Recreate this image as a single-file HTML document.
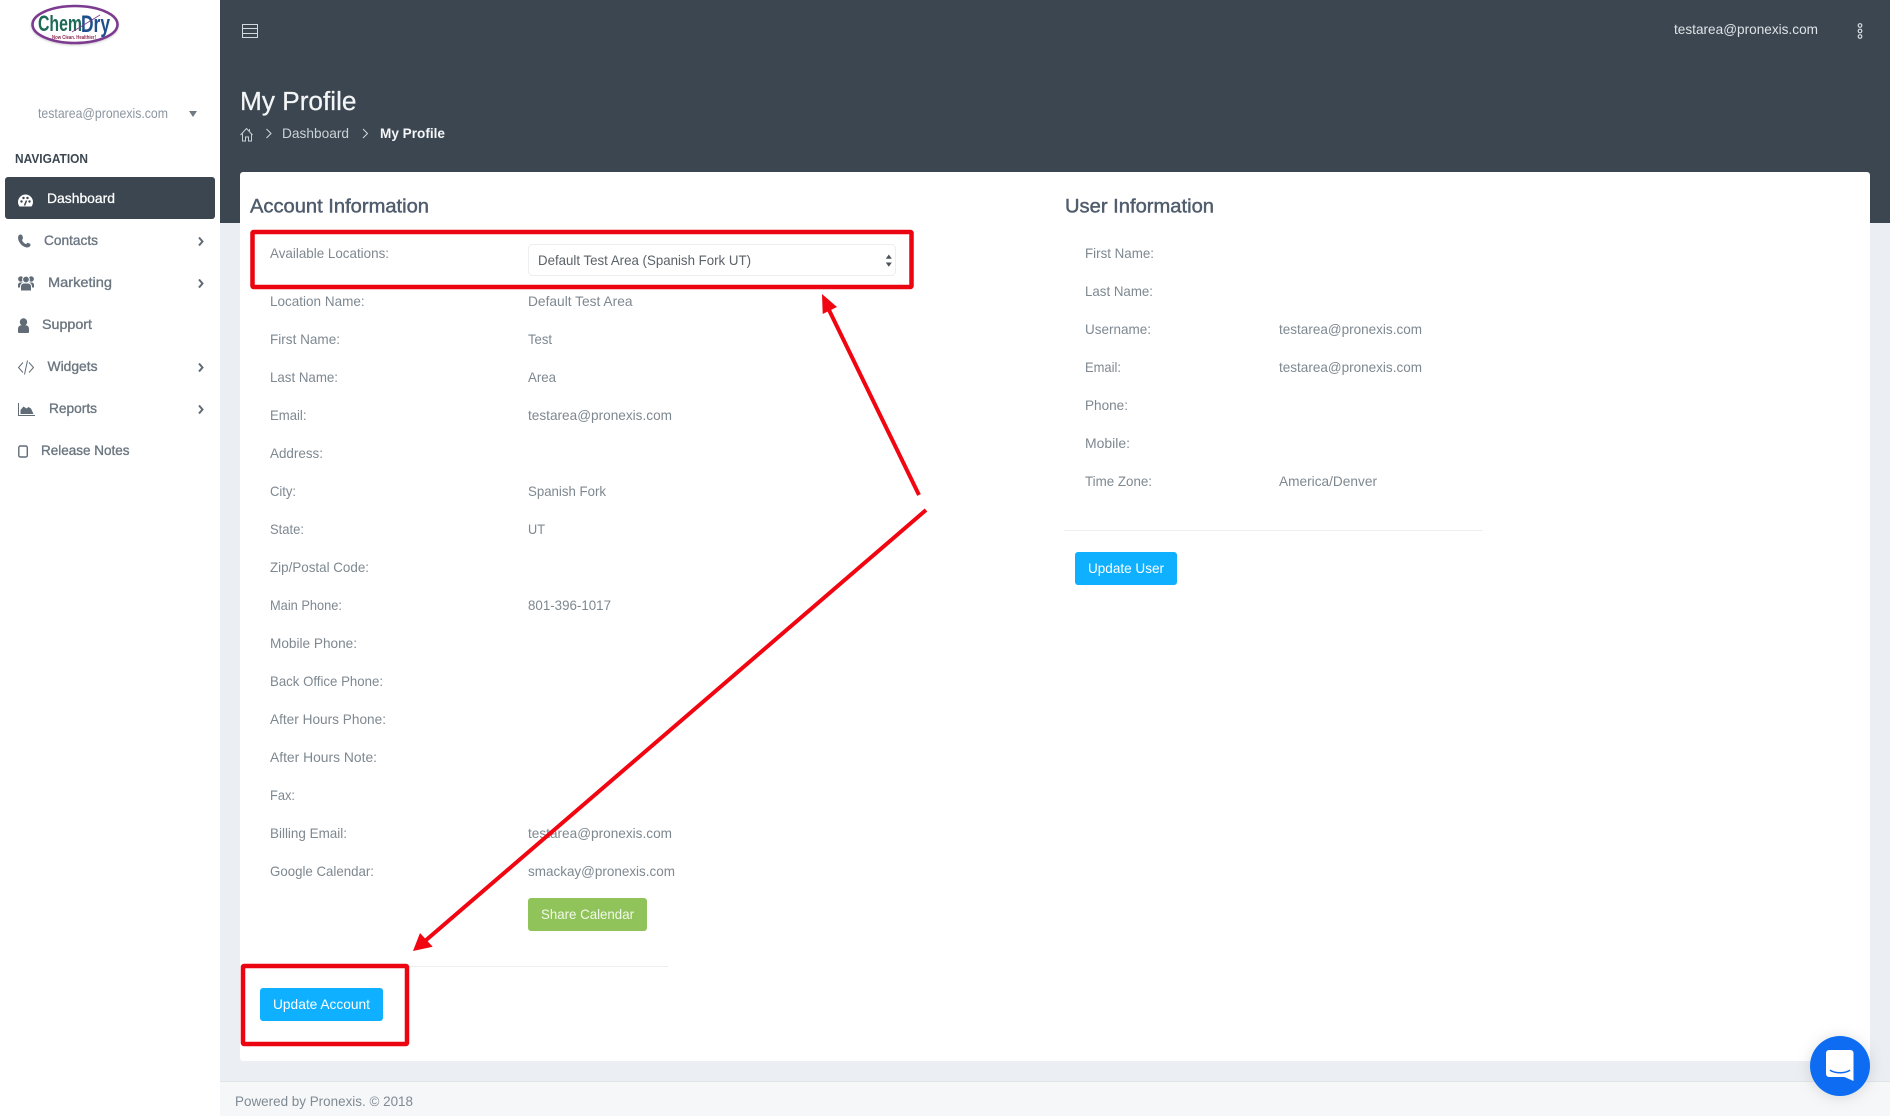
<!DOCTYPE html>
<html lang="en"><head><meta charset="utf-8"><title>My Profile</title>
<style>
html,body{margin:0;padding:0;width:1890px;height:1116px;overflow:hidden;background:#ebeef2}
svg{display:block}
text{font-family:"Liberation Sans",Arial,sans-serif;font-size:14px;fill:#7e8890}
.l{font-size:14px;fill:#7f8890}
.n{font-size:14px;fill:#6b7680;stroke:#6b7680;stroke-width:.35px}
.h{font-size:19.5px;fill:#4f5c6c;stroke:#4f5c6c;stroke-width:.45px}
.b{font-size:14px;fill:#fff}
</style></head><body>
<svg width="1890" height="1116" viewBox="0 0 1890 1116" xmlns="http://www.w3.org/2000/svg">
<defs>
<filter id="s" x="-50%" y="-50%" width="200%" height="200%"><feDropShadow dx="0" dy="1" stdDeviation="7" flood-color="#000" flood-opacity=".13"/></filter>
<filter id="ls" x="-10%" y="-20%" width="120%" height="140%"><feDropShadow dx="0" dy="1" stdDeviation="1" flood-color="#000" flood-opacity=".2"/></filter>
</defs>
<rect width="1890" height="1116" fill="#ebeef2"/>
<rect x="220" width="1670" height="223" fill="#3b4650"/>
<rect x="220" y="1081" width="1670" height="35" fill="#f5f7f9"/>
<rect x="220" y="1081" width="1670" height="1" fill="#e1e4e8"/>
<text x="235" y="1106" textLength="178" lengthAdjust="spacingAndGlyphs" style="fill:#808a93">Powered by Pronexis. © 2018</text>

<!-- sidebar -->
<rect width="220" height="1116" fill="#fff"/>
<g>
<ellipse cx="75" cy="24.5" rx="42.5" ry="18.5" fill="#fff" stroke="#7c3a8f" stroke-width="2.6" filter="url(#ls)"/>
<text x="38" y="31" textLength="44" lengthAdjust="spacingAndGlyphs" style="font-size:22px;font-weight:bold;fill:#1d6a58">Chem</text>
<text x="81" y="32" textLength="29" lengthAdjust="spacingAndGlyphs" style="font-size:24px;font-weight:bold;fill:#1d4f8a">Dry</text>
<path d="M72 32L100 15" stroke="#7c3a8f" stroke-width=".8" fill="none"/>
<text x="52" y="39" textLength="44" lengthAdjust="spacingAndGlyphs" style="font-size:5px;font-weight:bold;fill:#8d2a50">Now Clean. Healthier!</text>
</g>
<text x="38" y="118" textLength="130" lengthAdjust="spacingAndGlyphs" style="fill:#8c969f">testarea@pronexis.com</text>
<path d="M189 111h8l-4 6z" fill="#6f7a84"/>
<text x="15" y="163" textLength="73" lengthAdjust="spacingAndGlyphs" style="font-size:12.5px;font-weight:bold;fill:#3b4650">NAVIGATION</text>
<rect x="5" y="177" width="210" height="42" rx="3" fill="#3b4650"/>
<path d="M19.5 206.500a7.500 7.500 0 1 1 12 0z" fill="#fff"/>
<circle cx="21.500" cy="201.500" r="1.200" fill="#3b4650"/><circle cx="23.500" cy="198" r="1.200" fill="#3b4650"/><circle cx="27.500" cy="198" r="1.200" fill="#3b4650"/><circle cx="29.500" cy="201.500" r="1.200" fill="#3b4650"/><path d="M24.500 205.500l2-5" stroke="#3b4650" stroke-width="1.500"/>
<text x="47" y="203" textLength="68" lengthAdjust="spacingAndGlyphs" class="n" style="fill:#fff;stroke:#fff;stroke-width:.25px">Dashboard</text>

<path d="M19 235c1.500-1 3-.5 3.500 1l.5 2c0 1-1 1.500-1 2 .5 1.500 2 3.500 4 4 .7 0 1-1.200 2-1.200l2 1c1 .8 .5 2.200-.5 3-3 2-7-.5-9-3-2-2.500-3.500-6.500-1.500-8.800z" fill="#616c77"/>
<text x="44" y="245" textLength="54" lengthAdjust="spacingAndGlyphs" class="n">Contacts</text>
<path d="M199 237.500l3.500 4-3.500 4" fill="none" stroke="#5f6a75" stroke-width="2"/>

<circle cx="20.800" cy="279" r="2.700" fill="#616c77"/><circle cx="31.200" cy="279" r="2.700" fill="#616c77"/>
<path d="M18 287.500v-2.500c0-1.500 1-2.500 2.500-2.500h11c1.500 0 2.500 1 2.500 2.500v2.500z" fill="#616c77"/>
<circle cx="26" cy="279.500" r="3.400" fill="#616c77" stroke="#fff" stroke-width="1"/>
<path d="M20.500 291v-4.500c0-2 1.500-3.500 3.500-3.500h4c2 0 3.500 1.500 3.500 3.500v4.500z" fill="#616c77" stroke="#fff" stroke-width="1"/>
<text x="48" y="287" textLength="64" lengthAdjust="spacingAndGlyphs" class="n">Marketing</text>
<path d="M199 279.500l3.500 4-3.500 4" fill="none" stroke="#5f6a75" stroke-width="2"/>

<circle cx="23.500" cy="322" r="3.700" fill="#616c77"/><path d="M18 332v-3c0-3 2-4 5.500-4s5.500 1 5.500 4v3c0 .5-.5 1-1 1h-9c-.5 0-1-.5-1-1z" fill="#616c77"/>
<text x="42" y="329" textLength="50" lengthAdjust="spacingAndGlyphs" class="n">Support</text>

<path d="M23 362.500l-4.500 5 4.500 5M29 362.500l4.500 5-4.500 5M27.500 360.500l-3 14" fill="none" stroke="#616c77" stroke-width="1"/>
<text x="47.500" y="371" textLength="50" lengthAdjust="spacingAndGlyphs" class="n">Widgets</text>
<path d="M199 363.500l3.500 4-3.500 4" fill="none" stroke="#5f6a75" stroke-width="2"/>

<path d="M18.500 403v12.500H35" fill="none" stroke="#616c77" stroke-width="1"/>
<path d="M20.500 414v-4l3-3.500 3 2 2-1.500 2.500 1.500 2.500 5.500z" fill="#616c77"/>
<text x="49" y="413" textLength="48" lengthAdjust="spacingAndGlyphs" class="n">Reports</text>
<path d="M199 405.500l3.500 4-3.500 4" fill="none" stroke="#5f6a75" stroke-width="2"/>

<rect x="18.800" y="446" width="8.500" height="11" rx="1.500" fill="none" stroke="#616c77" stroke-width="1.400"/>
<text x="41" y="455" textLength="88.500" lengthAdjust="spacingAndGlyphs" class="n">Release Notes</text>

<!-- header -->
<g fill="none" stroke="#d4d9de" stroke-width="1">
<rect x="242.500" y="24.500" width="15" height="4"/><rect x="242.500" y="28.500" width="15" height="5"/><rect x="242.500" y="33.500" width="15" height="4"/>
</g>
<text x="1674" y="34" textLength="144" lengthAdjust="spacingAndGlyphs" style="fill:#dfe3e7">testarea@pronexis.com</text>
<g fill="none" stroke="#d4d9de" stroke-width="1.200"><circle cx="1860" cy="25.500" r="1.800"/><circle cx="1860" cy="31" r="1.800"/><circle cx="1860" cy="36.500" r="1.800"/></g>
<text x="240" y="110" textLength="116.500" lengthAdjust="spacingAndGlyphs" style="font-size:25.500px;fill:#f3f5f6;stroke:#f3f5f6;stroke-width:.25px">My Profile</text>
<path d="M240.500 135l6-6.500 6 6.500M242.500 133.500v7.500h3v-4h3v4h3v-7.500M249.500 129v2" fill="none" stroke="#c9ced3" stroke-width="1"/>
<path d="M266.500 129l4.500 4.500-4.500 4.500M363 129l4.500 4.500-4.500 4.500" fill="none" stroke="#d4d9de" stroke-width="1"/>
<text x="282" y="138" textLength="67" lengthAdjust="spacingAndGlyphs" style="fill:#ccd1d6">Dashboard</text>
<text x="380" y="138" textLength="65" lengthAdjust="spacingAndGlyphs" style="font-weight:bold;fill:#f5f6f7">My Profile</text>

<!-- card -->
<rect x="240" y="172" width="1630" height="889" rx="3" fill="#fff"/>
<text x="250" y="212.500" textLength="179" lengthAdjust="spacingAndGlyphs" class="h">Account Information</text>
<text x="1065" y="212.500" textLength="149" lengthAdjust="spacingAndGlyphs" class="h">User Information</text>

<text class="l" x="270" y="258" textLength="119" lengthAdjust="spacingAndGlyphs">Available Locations:</text>
<rect x="528.500" y="244.500" width="367" height="31" rx="4" fill="#fff" stroke="#eceef0"/>
<text x="538" y="265" textLength="213" lengthAdjust="spacingAndGlyphs" style="fill:#5b6268">Default Test Area (Spanish Fork UT)</text>
<path d="M885.800 258.800h6l-3-4.300zM885.800 262.500h6l-3 4.300z" fill="#4b535a"/>

<g class="l">
<text x="270" y="306" textLength="94.600" lengthAdjust="spacingAndGlyphs">Location Name:</text>
<text x="270" y="344" textLength="70" lengthAdjust="spacingAndGlyphs">First Name:</text>
<text x="270" y="382" textLength="68" lengthAdjust="spacingAndGlyphs">Last Name:</text>
<text x="270" y="420" textLength="36.500" lengthAdjust="spacingAndGlyphs">Email:</text>
<text x="270" y="458" textLength="53" lengthAdjust="spacingAndGlyphs">Address:</text>
<text x="270" y="496" textLength="26" lengthAdjust="spacingAndGlyphs">City:</text>
<text x="270" y="534" textLength="34" lengthAdjust="spacingAndGlyphs">State:</text>
<text x="270" y="572" textLength="99" lengthAdjust="spacingAndGlyphs">Zip/Postal Code:</text>
<text x="270" y="610" textLength="72" lengthAdjust="spacingAndGlyphs">Main Phone:</text>
<text x="270" y="648" textLength="87" lengthAdjust="spacingAndGlyphs">Mobile Phone:</text>
<text x="270" y="686" textLength="113" lengthAdjust="spacingAndGlyphs">Back Office Phone:</text>
<text x="270" y="724" textLength="116" lengthAdjust="spacingAndGlyphs">After Hours Phone:</text>
<text x="270" y="762" textLength="107" lengthAdjust="spacingAndGlyphs">After Hours Note:</text>
<text x="270" y="800" textLength="25" lengthAdjust="spacingAndGlyphs">Fax:</text>
<text x="270" y="838" textLength="77" lengthAdjust="spacingAndGlyphs">Billing Email:</text>
<text x="270" y="876" textLength="104" lengthAdjust="spacingAndGlyphs">Google Calendar:</text>

<text x="528" y="306" textLength="104.500" lengthAdjust="spacingAndGlyphs">Default Test Area</text>
<text x="528" y="344" textLength="24" lengthAdjust="spacingAndGlyphs">Test</text>
<text x="528" y="382" textLength="28" lengthAdjust="spacingAndGlyphs">Area</text>
<text x="528" y="420" textLength="144" lengthAdjust="spacingAndGlyphs">testarea@pronexis.com</text>
<text x="528" y="496" textLength="78" lengthAdjust="spacingAndGlyphs">Spanish Fork</text>
<text x="528" y="534" textLength="17" lengthAdjust="spacingAndGlyphs">UT</text>
<text x="528" y="610" textLength="83" lengthAdjust="spacingAndGlyphs">801-396-1017</text>
<text x="528" y="838" textLength="144" lengthAdjust="spacingAndGlyphs">testarea@pronexis.com</text>
<text x="528" y="876" textLength="147" lengthAdjust="spacingAndGlyphs">smackay@pronexis.com</text>

<text x="1085" y="258" textLength="69" lengthAdjust="spacingAndGlyphs">First Name:</text>
<text x="1085" y="296" textLength="68" lengthAdjust="spacingAndGlyphs">Last Name:</text>
<text x="1085" y="334" textLength="66" lengthAdjust="spacingAndGlyphs">Username:</text>
<text x="1085" y="372" textLength="36" lengthAdjust="spacingAndGlyphs">Email:</text>
<text x="1085" y="410" textLength="43" lengthAdjust="spacingAndGlyphs">Phone:</text>
<text x="1085" y="448" textLength="45" lengthAdjust="spacingAndGlyphs">Mobile:</text>
<text x="1085" y="486" textLength="67" lengthAdjust="spacingAndGlyphs">Time Zone:</text>
<text x="1279" y="334" textLength="143" lengthAdjust="spacingAndGlyphs">testarea@pronexis.com</text>
<text x="1279" y="372" textLength="143" lengthAdjust="spacingAndGlyphs">testarea@pronexis.com</text>
<text x="1279" y="486" textLength="98" lengthAdjust="spacingAndGlyphs">America/Denver</text>
</g>

<rect x="528" y="898" width="119" height="33" rx="3" fill="#90c45a"/>
<text class="b" x="541" y="919" textLength="93" lengthAdjust="spacingAndGlyphs" style="fill:#f2f8ea">Share Calendar</text>
<rect x="250" y="966" width="418" height="1" fill="#eceef1"/>
<rect x="260" y="988" width="123" height="33" rx="3" fill="#0fb0ff"/>
<text class="b" x="273" y="1009" textLength="97" lengthAdjust="spacingAndGlyphs">Update Account</text>
<rect x="1064" y="530" width="419" height="1" fill="#eceef1"/>
<rect x="1075" y="552" width="102" height="33" rx="3" fill="#0fb0ff"/>
<text class="b" x="1088" y="573" textLength="76" lengthAdjust="spacingAndGlyphs">Update User</text>

<!-- annotations -->
<g fill="none" stroke="#ea0510" stroke-width="4.500">
<rect x="252.500" y="232" width="659" height="55" rx="1"/>
<rect x="243" y="966" width="164" height="78" rx="1"/>
</g>
<path d="M919 495L829 310" stroke="#f00510" stroke-width="4" fill="none"/>
<path d="M822 294l.7 20 14.300-7z" fill="#f00510"/>
<path d="M926 510L425 941" stroke="#f00510" stroke-width="4" fill="none"/>
<path d="M413 951l7-18 12.700 13.700z" fill="#f00510"/>

<!-- chat -->
<circle cx="1840" cy="1066" r="30" fill="#0d6cf2" filter="url(#s)"/>
<path d="M1829 1050h21.500a3 3 0 0 1 3 3v28l-9-4h-15.500a3 3 0 0 1-3-3v-21a3 3 0 0 1 3-3z" fill="#fff"/>
<path d="M1830.500 1070.500c5 3 14 3 19 0" fill="none" stroke="#0d6cf2" stroke-width="1.600" stroke-linecap="round"/>
</svg>
</body></html>
